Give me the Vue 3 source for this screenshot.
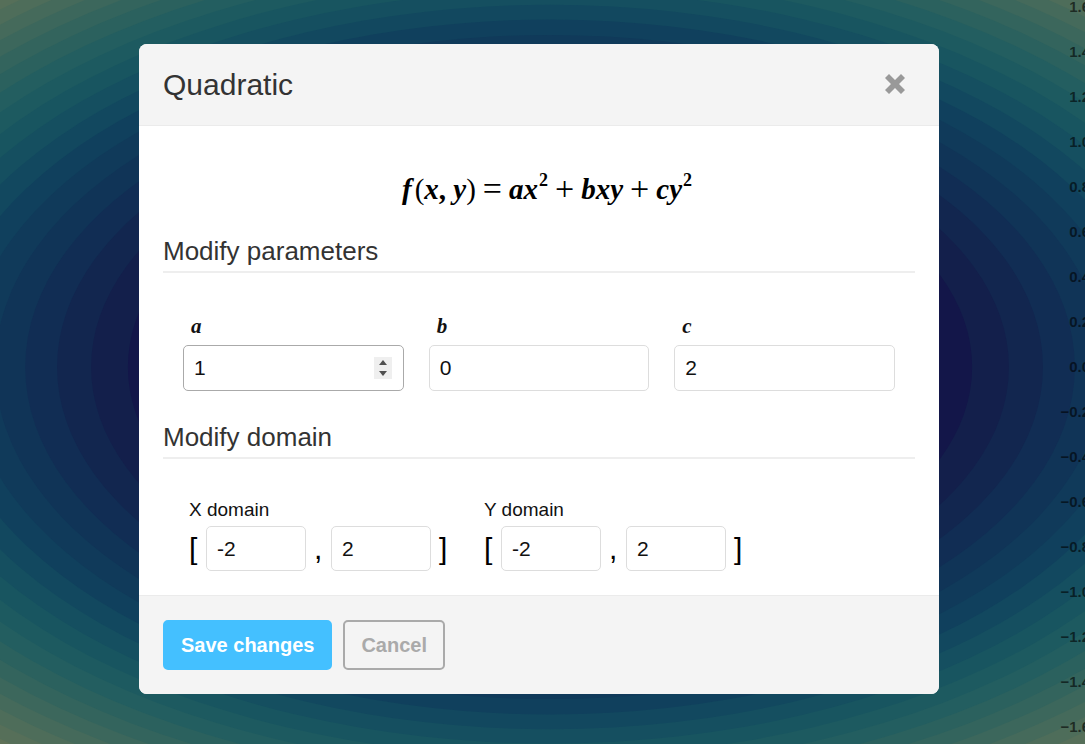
<script setup>
import { ref } from 'vue'

const bandColors = [
  '#131649', '#131649', '#131649', '#131649', '#131649', '#131649', '#131f4b',
  '#12264f', '#112d54', '#103457', '#103a5a', '#10405d', '#12485f', '#154f60',
  '#185560', '#1d5a60', '#235e60', '#2b615e', '#33645d', '#3c675c', '#456a5b',
  '#4e6d5a', '#566f59', '#5f7258'
]
const bands = bandColors
  .map((color, i) => ({
    color,
    rx: Math.sqrt(32400 * (i + 0.5)),
    ry: Math.sqrt(10500 * (i + 0.5))
  }))
  .reverse()

const ticks = Array.from({ length: 17 }, (_, i) => {
  const value = (8 - i) / 5
  return {
    y: 12 + i * 45,
    label: (value < 0 ? '−' : '') + Math.abs(value).toFixed(1)
  }
})

const params = ref([
  { name: 'a', value: 1, active: true },
  { name: 'b', value: 0, active: false },
  { name: 'c', value: 2, active: false }
])
const domains = ref([
  { axis: 'X', min: -2, max: 2 },
  { axis: 'Y', min: -2, max: 2 }
])
</script>

<template>
  <div class="page">
    <svg class="contours" viewBox="0 0 1085 744" preserveAspectRatio="xMidYMid slice" aria-hidden="true">
      <rect width="1085" height="744" fill="#5f7258" />
      <ellipse
        v-for="band in bands"
        :key="band.rx"
        cx="550"
        cy="367"
        :rx="band.rx"
        :ry="band.ry"
        :fill="band.color"
      />
      <text v-for="tick in ticks" :key="tick.y" class="tick" x="1090" :y="tick.y">{{ tick.label }}</text>
    </svg>

    <form class="modal" role="dialog" aria-labelledby="modal-title" @submit.prevent>
      <header class="head">
        <h2 id="modal-title">Quadratic</h2>
        <button class="close" type="button" aria-label="Close">
          <svg viewBox="0 0 20 20" width="20" height="20">
            <path d="M4 0 L10 6 L16 0 L20 4 L14 10 L20 16 L16 20 L10 14 L4 20 L0 16 L6 10 L0 4 Z" />
          </svg>
        </button>
      </header>

      <main class="body">
        <p class="formula">
          <span><i class="fn">f</i><span class="paren">(</span><i>x</i>, <i>y</i><span class="paren">)</span></span>
          <span class="op">=</span>
          <span><i>ax</i><sup>2</sup></span>
          <span class="op">+</span>
          <span><i>bxy</i></span>
          <span class="op">+</span>
          <span><i>cy</i><sup>2</sup></span>
        </p>

        <h3>Modify parameters</h3>
        <div class="params">
          <div v-for="p in params" :key="p.name" class="param">
            <label :for="'param-' + p.name">{{ p.name }}</label>
            <div class="field">
              <input :id="'param-' + p.name" v-model="p.value" type="number" :class="{ active: p.active }" />
              <div v-if="p.active" class="spinner">
                <button type="button" aria-label="Increase" @click="p.value++">
                  <svg viewBox="0 0 8 5" width="8" height="5"><path d="M4 0 L8 5 H0 Z" /></svg>
                </button>
                <button type="button" aria-label="Decrease" @click="p.value--">
                  <svg viewBox="0 0 8 5" width="8" height="5"><path d="M0 0 H8 L4 5 Z" /></svg>
                </button>
              </div>
            </div>
          </div>
        </div>

        <h3>Modify domain</h3>
        <div class="domains">
          <div v-for="d in domains" :key="d.axis">
            <label :for="'min-' + d.axis">{{ d.axis }} domain</label>
            <div class="range">
              <span class="mark">[</span>
              <input :id="'min-' + d.axis" v-model="d.min" type="number" />
              <span class="mark">,</span>
              <input v-model="d.max" type="number" :aria-label="d.axis + ' domain maximum'" />
              <span class="mark">]</span>
            </div>
          </div>
        </div>
      </main>

      <footer class="foot">
        <button class="btn save" type="submit">Save changes</button>
        <button class="btn cancel" type="button">Cancel</button>
      </footer>
    </form>
  </div>
</template>

<style>
body {
  margin: 0;
}
</style>

<style scoped>
.page {
  position: relative;
  box-sizing: border-box;
  min-height: 100vh;
  padding: 44px 7px 44px 0;
  overflow: hidden;
  font-family: "Liberation Sans", Arial, sans-serif;
  color: #111;
}
.contours {
  position: absolute;
  inset: 0;
  width: 100%;
  height: 100%;
}
.tick {
  font-size: 15px;
  font-weight: bold;
  text-anchor: end;
  fill: #000;
  fill-opacity: 0.6;
}
.modal {
  position: relative;
  max-width: 800px;
  margin: 0 auto;
  border-radius: 8px;
  background: #fff;
  overflow: hidden;
}
.head {
  display: flex;
  align-items: center;
  justify-content: space-between;
  height: 81px;
  padding: 0 24px;
  background: #f4f4f4;
  border-bottom: 1px solid #ebebeb;
}
h2,
h3 {
  margin: 0;
  font-weight: normal;
  color: #333;
}
h2 {
  font-size: 30px;
}
.close {
  display: flex;
  padding: 9px 10px 11px;
  border: 0;
  background: none;
}
.close path {
  fill: #999;
}
.body {
  padding: 40px 24px 24px;
}
.formula {
  display: flex;
  justify-content: center;
  gap: 7px;
  margin: 0 0 23px;
  padding-left: 16px;
  font: bold 29px/46px "Liberation Serif", "Times New Roman", serif;
  color: #000;
}
.formula sup {
  margin-left: 1px;
  font-size: 18px;
  line-height: 0;
  vertical-align: 13px;
}
.formula .fn {
  margin-right: 3px;
}
.formula .paren {
  font-weight: normal;
}
.formula .op {
  font-weight: normal;
  font-size: 34px;
}
h3 {
  padding-bottom: 4px;
  border-bottom: 2px solid #eee;
  font-size: 26px;
  line-height: 32px;
}
.params {
  display: grid;
  grid-template-columns: repeat(3, 1fr);
  gap: 25px;
  padding: 38px 20px 30px;
}
.param label {
  display: block;
  padding: 0 8px 4px;
  font: italic bold 21px/30px "Liberation Serif", "Times New Roman", serif;
}
.field {
  position: relative;
}
input {
  display: block;
  box-sizing: border-box;
  width: 100%;
  height: 46px;
  margin: 0;
  padding: 0 10px;
  border: 1px solid #ddd;
  border-radius: 5px;
  background: #fff;
  font: 21px "Liberation Sans", Arial, sans-serif;
  color: #111;
  appearance: textfield;
  outline: 0;
}
input::-webkit-inner-spin-button {
  appearance: none;
}
input.active {
  border-color: #aaa;
}
.spinner {
  position: absolute;
  top: 12px;
  right: 12px;
  display: flex;
  flex-direction: column;
  width: 18px;
  height: 22px;
  background: #efefef;
}
.spinner button {
  display: flex;
  flex: 1;
  align-items: center;
  justify-content: center;
  padding: 0;
  border: 0;
  background: none;
}
.spinner path {
  fill: #505050;
}
.domains {
  display: flex;
  flex-wrap: wrap;
  gap: 36px;
  padding: 38px 26px 0;
}
.domains label {
  display: block;
  padding-bottom: 3px;
  font-size: 19px;
  line-height: 26px;
}
.range {
  display: flex;
  align-items: center;
  gap: 8px;
}
.range input {
  width: 100px;
  height: 45px;
}
.mark {
  width: 9px;
  font-size: 30px;
  line-height: 40px;
  color: #000;
}
.foot {
  display: flex;
  gap: 11px;
  padding: 24px;
  background: #f4f4f4;
  border-top: 1px solid #ebebeb;
}
.btn {
  height: 50px;
  padding: 0 16px;
  border: 2px solid #aaa;
  border-radius: 5px;
  background: none;
  font: bold 20px "Liberation Sans", Arial, sans-serif;
  color: #aaa;
}
.save {
  border-color: #44c0ff;
  background: #44c0ff;
  color: #fff;
}
</style>
